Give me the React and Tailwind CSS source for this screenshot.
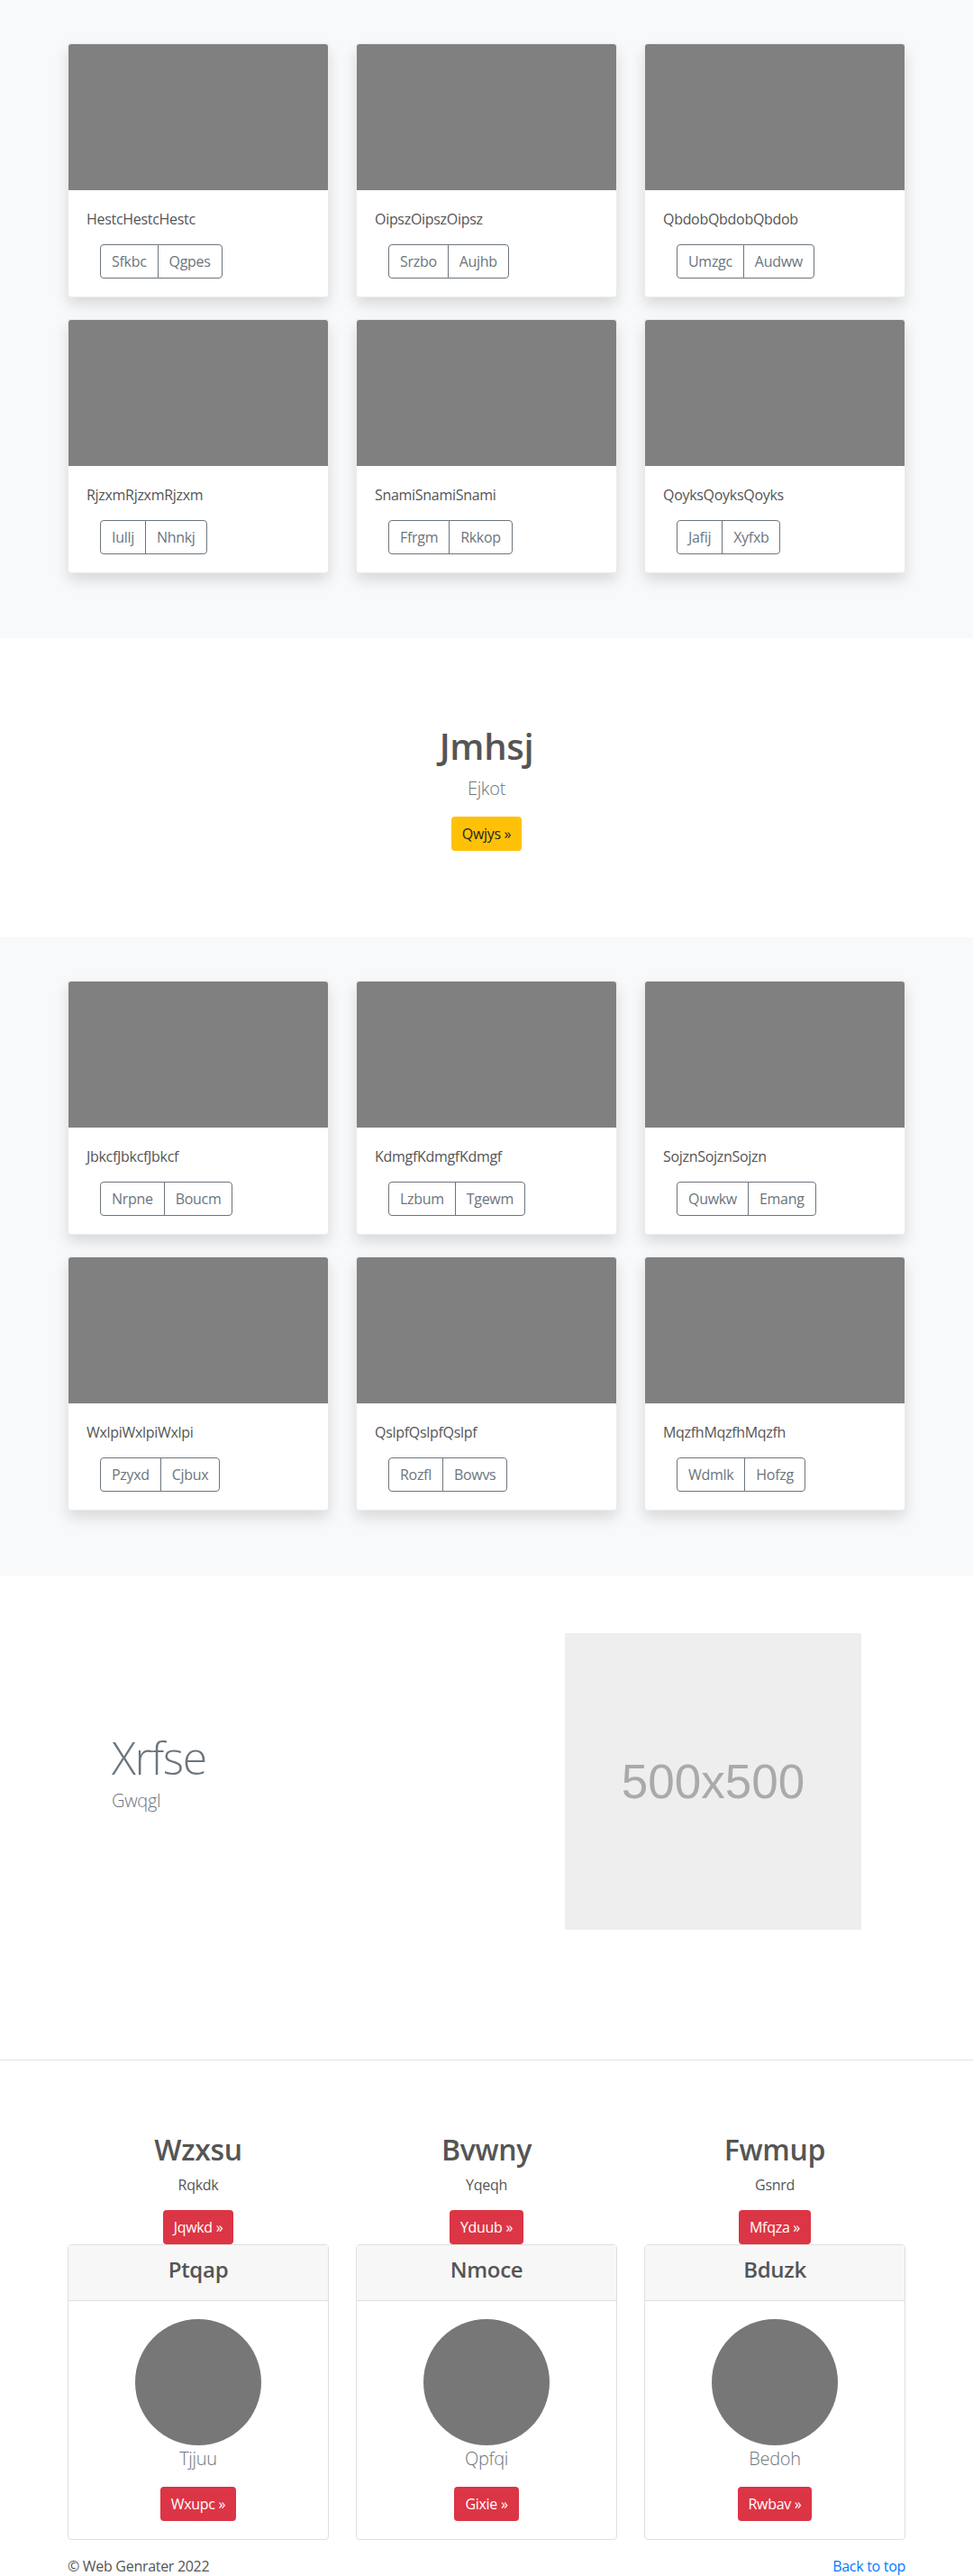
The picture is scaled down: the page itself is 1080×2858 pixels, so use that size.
import React from "react";

const album1 = [
  ["HestcHestcHestc", "Sfkbc", "Qgpes"],
  ["OipszOipszOipsz", "Srzbo", "Aujhb"],
  ["QbdobQbdobQbdob", "Umzgc", "Audww"],
  ["RjzxmRjzxmRjzxm", "Iullj", "Nhnkj"],
  ["SnamiSnamiSnami", "Ffrgm", "Rkkop"],
  ["QoyksQoyksQoyks", "Jafij", "Xyfxb"],
];

const album2 = [
  ["JbkcfJbkcfJbkcf", "Nrpne", "Boucm"],
  ["KdmgfKdmgfKdmgf", "Lzbum", "Tgewm"],
  ["SojznSojznSojzn", "Quwkw", "Emang"],
  ["WxlpiWxlpiWxlpi", "Pzyxd", "Cjbux"],
  ["QslpfQslpfQslpf", "Rozfl", "Bowvs"],
  ["MqzfhMqzfhMqzfh", "Wdmlk", "Hofzg"],
];

const pricing = [
  ["Wzxsu", "Rqkdk", "Jqwkd", "Ptqap", "Tjjuu", "Wxupc"],
  ["Bvwny", "Yqeqh", "Yduub", "Nmoce", "Qpfqi", "Gixie"],
  ["Fwmup", "Gsnrd", "Mfqza", "Bduzk", "Bedoh", "Rwbav"],
];

function Album({ items }) {
  return (
    <section className="bg-[#f8f9fa] pt-12 pb-[72px]">
      <div className="w-[960px] mx-auto px-[15px] grid grid-cols-3 gap-x-[30px] gap-y-6">
        {items.map(([t, a, b]) => (
          <div
            key={t}
            className="bg-white border border-black/[0.08] rounded overflow-hidden shadow-[0_8px_16px_rgba(0,0,0,0.13)]"
          >
            <div className="h-[162px] bg-[#808080]" />
            <div className="p-5">
              <p className="text-base leading-6 mb-4 text-[#555]">{t}</p>
              <div className="flex ml-[15px]">
                <button className="h-[38px] px-3 text-base leading-6 text-[#6c757d] border border-[#6c757d] rounded-l">
                  {a}
                </button>
                <button className="h-[38px] px-3 -ml-px text-base leading-6 text-[#6c757d] border border-[#6c757d] rounded-r">
                  {b}
                </button>
              </div>
            </div>
          </div>
        ))}
      </div>
    </section>
  );
}

export default function App() {
  return (
    <div className="font-['Open_Sans',sans-serif] tracking-[-0.3px] text-[#555] bg-white">
      <Album items={album1} />

      <section className="pt-24 pb-24 text-center">
        <h1 className="text-[40px] leading-[48px] font-semibold mb-2 text-[#555]">Jmhsj</h1>
        <p className="text-xl leading-[30px] font-light mb-4 text-[#6c757d]">Ejkot</p>
        <div className="flex justify-center">
          <button className="h-[38px] px-3 text-base leading-6 bg-[#ffc107] text-[#212529] rounded">
            Qwjys &raquo;
          </button>
        </div>
      </section>

      <Album items={album2} />

      <section className="pt-16 pb-16">
        <div className="w-[960px] mx-auto flex items-center">
          <div className="w-[567px] pl-16">
            <h2 className="text-[50px] leading-[50px] font-light tracking-[-1.5px] text-[#6c757d] mb-2">
              Xrfse
            </h2>
            <p className="text-xl leading-[30px] font-light text-[#6c757d] mb-4">Gwqgl</p>
          </div>
          <div className="w-[329px] h-[329px] bg-[#eeeeee] flex items-center justify-center">
            <span className="font-['Liberation_Sans',sans-serif] tracking-normal text-[53px] text-[#aaaaaa]">500x500</span>
          </div>
        </div>
      </section>

      <hr className="border-0 border-t border-[#e5e5e5] mt-20 mb-20" />

      <section>
        <div className="w-[960px] mx-auto px-[15px] grid grid-cols-3 gap-x-[30px]">
          {pricing.map(([h, s, btn, card, lead, cbtn]) => (
            <div key={h} className="text-center">
              <h2 className="text-[32px] leading-[38px] font-semibold mb-2 text-[#555]">{h}</h2>
              <p className="text-base leading-6 mb-4 text-[#555]">{s}</p>
              <div className="flex justify-center">
                <button className="h-[38px] px-3 text-base leading-6 bg-[#dc3545] text-white rounded">
                  {btn} &raquo;
                </button>
              </div>
              <div className="border border-[#dfdfdf] rounded">
                <div className="bg-[#f7f7f7] border-b border-[#dfdfdf] px-5 pt-3 pb-3">
                  <h4 className="text-2xl leading-[29px] font-semibold mb-2 text-[#555]">{card}</h4>
                </div>
                <div className="p-5">
                  <div className="w-[140px] h-[140px] rounded-full bg-[#777777] mx-auto" />
                  <p className="text-xl leading-[30px] font-light mb-4 text-[#6c757d]">{lead}</p>
                  <div className="flex justify-center">
                    <button className="h-[38px] px-3 text-base leading-6 bg-[#dc3545] text-white rounded">
                      {cbtn} &raquo;
                    </button>
                  </div>
                </div>
              </div>
            </div>
          ))}
        </div>
      </section>

      <footer className="w-[960px] mx-auto px-[15px] mt-[17px] pb-12 flex justify-between text-base leading-6">
        <p className="text-[#555]">&copy; Web Genrater 2022</p>
        <a href="#" className="text-[#007bff]">Back to top</a>
      </footer>
    </div>
  );
}
